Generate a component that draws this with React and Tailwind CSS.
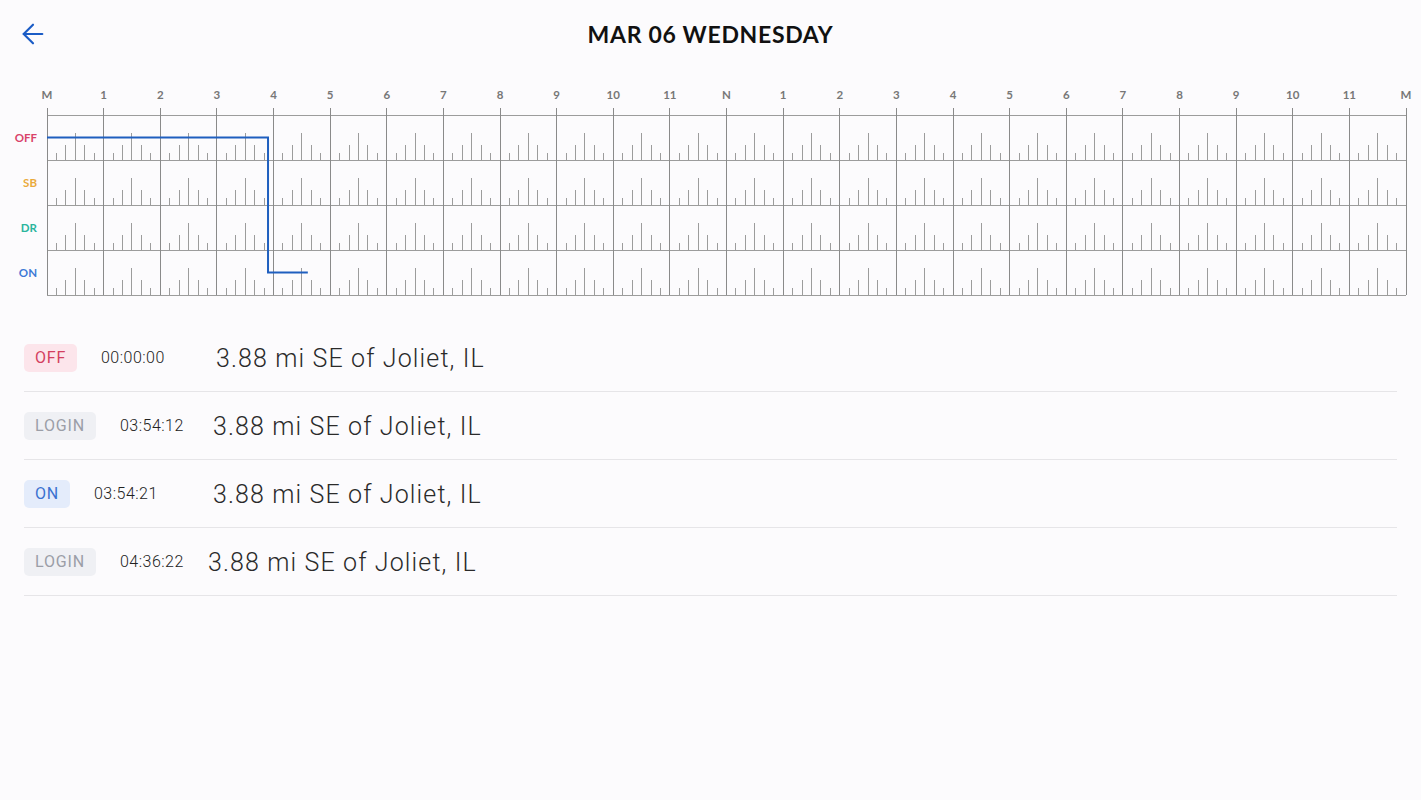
import { ArrowLeft } from 'lucide-react'

const HOUR_W = 1359 / 24
const ROW_H = 45
const GRID_TOP = 30

const hourLabels = ['M', '1', '2', '3', '4', '5', '6', '7', '8', '9', '10', '11', 'N', '1', '2', '3', '4', '5', '6', '7', '8', '9', '10', '11', 'M']

const rowLabels = [
  { label: 'OFF', color: 'text-[#d9436a]' },
  { label: 'SB', color: 'text-[#eaaa3c]' },
  { label: 'DR', color: 'text-[#2bb59d]' },
  { label: 'ON', color: 'text-[#3d79d6]' },
]

const events = [
  {
    status: 'OFF',
    badge: 'w-[53px] bg-[#fce5eb] text-[#d33f60]',
    time: '00:00:00',
    timeBox: 'w-[115px]',
  },
  {
    status: 'LOGIN',
    badge: 'w-[72px] bg-[#eff0f4] text-[#9b9ea7]',
    time: '03:54:12',
    timeBox: 'w-[93px]',
  },
  {
    status: 'ON',
    badge: 'w-[46px] bg-[#e4ecfb] text-[#3a72d0]',
    time: '03:54:21',
    timeBox: 'w-[119px]',
  },
  {
    status: 'LOGIN',
    badge: 'w-[72px] bg-[#eff0f4] text-[#9b9ea7]',
    time: '04:36:22',
    timeBox: 'w-[88px]',
  },
]

const hToX = (h) => h * HOUR_W

const LogChart = () => {
  const bottom = GRID_TOP + ROW_H * 4
  const ticks = []
  for (let r = 0; r < 4; r++) {
    const base = GRID_TOP + ROW_H * (r + 1)
    for (let h = 0; h < 24; h++) {
      for (let k = 1; k < 6; k++) {
        const len = k === 3 ? 27 : k === 2 || k === 4 ? 15 : 7
        const x = hToX(h) + (k * HOUR_W) / 6
        ticks.push(<line key={`${r}-${h}-${k}`} x1={x} x2={x} y1={base} y2={base - len} />)
      }
    }
  }

  const offY = GRID_TOP + ROW_H / 2
  const onY = GRID_TOP + ROW_H * 3.5
  const x1 = hToX(3 + 54 / 60 + 12 / 3600)
  const x2 = hToX(4 + 36 / 60 + 22 / 3600)

  return (
    <svg width="1359" height="212" className="overflow-visible">
      <g fill="#777" fontSize="11.5" fontWeight="700" textAnchor="middle" fontFamily="Lato, 'Noto Sans', sans-serif">
        {hourLabels.map((l, i) => (
          <text key={i} x={hToX(i)} y="14">
            {l}
          </text>
        ))}
      </g>
      <g stroke="#9c9c9c" strokeWidth="1" shapeRendering="crispEdges">
        {[0, 1, 2, 3, 4].map((r) => (
          <line key={r} x1="0" x2="1359" y1={GRID_TOP + ROW_H * r} y2={GRID_TOP + ROW_H * r} />
        ))}
        {hourLabels.map((_, i) => (
          <line key={i} x1={hToX(i)} x2={hToX(i)} y1="23" y2={bottom} stroke="#8a8a8a" />
        ))}
        {ticks}
      </g>
      <polyline
        points={`0,${offY} ${x1},${offY} ${x1},${onY} ${x2},${onY}`}
        fill="none"
        stroke="#1f5fbf"
        strokeWidth="2"
      />
    </svg>
  )
}

const App = () => {
  return (
    <main className="min-h-screen bg-[#fcfbfd] font-['Roboto',sans-serif]">
      <header className="grid h-[68px] grid-cols-[1fr_auto_1fr] items-center">
        <button className="ml-[17px] flex w-8 items-center text-[#1b5cc6]">
          <ArrowLeft size={32} strokeWidth={1.6} />
        </button>
        <h1 className="font-['Lato',sans-serif] text-[23px] font-bold tracking-[0.03em] text-[#111]">
          MAR 06 WEDNESDAY
        </h1>
        <div />
      </header>

      <section className="mt-[17px] flex">
        <div className="flex w-[47px] flex-col pt-[30px] pr-[10px]">
          {rowLabels.map((row) => (
            <div
              key={row.label}
              className={`flex h-[45px] items-center justify-end font-['Lato',sans-serif] text-[11.5px] font-bold ${row.color}`}
            >
              {row.label}
            </div>
          ))}
        </div>
        <LogChart />
      </section>

      <ul className="mx-[24px] mt-[27px]">
        {events.map((ev, i) => (
          <li key={i} className="flex h-[68px] items-center border-b border-[#e6e5e8]">
            <span
              className={`flex h-[28px] items-center justify-center rounded-[5px] text-[16px] tracking-[0.05em] ${ev.badge}`}
            >
              {ev.status}
            </span>
            <span className={`ml-[24px] text-[16px] font-light tracking-[0.03em] text-[#222] ${ev.timeBox}`}>
              {ev.time}
            </span>
            <span className="pt-[2px] text-[25px] font-light tracking-[0.045em] text-[#2a2a2a]">
              3.88 mi SE of Joliet, IL
            </span>
          </li>
        ))}
      </ul>
    </main>
  )
}

export default App
